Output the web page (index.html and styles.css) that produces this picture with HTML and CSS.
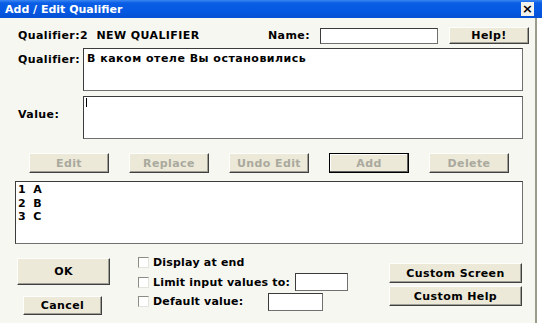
FILE: index.html
```html
<!DOCTYPE html>
<html>
<head>
<meta charset="utf-8">
<link rel="stylesheet" href="styles.css">
</head>
<body>
<div class="window">
  <div class="titlebar">
    <span class="title">Add / Edit Qualifier</span>
    <span class="close">×</span>
  </div>
  <div class="content">
    <div class="row1">
      <span class="lbl qid">Qualifier:2&nbsp;&nbsp;NEW QUALIFIER</span>
      <span class="lbl name-lbl">Name:</span>
      <span class="box name-field"></span>
      <button class="btn help">Help!</button>
    </div>
    <div class="row-text qual-row">
      <span class="lbl side">Qualifier:</span>
      <div class="box textbox">В каком отеле Вы остановились</div>
    </div>
    <div class="row-text value-row">
      <span class="lbl side value-lbl">Value:</span>
      <div class="box textbox"><span class="caret"></span></div>
    </div>
    <div class="actions">
      <button class="btn dis">Edit</button>
      <button class="btn dis">Replace</button>
      <button class="btn dis">Undo Edit</button>
      <button class="btn dis default">Add</button>
      <button class="btn dis">Delete</button>
    </div>
    <div class="box list">
      <div>1&nbsp;&nbsp;A</div>
      <div>2&nbsp;&nbsp;B</div>
      <div>3&nbsp;&nbsp;C</div>
    </div>
    <div class="bottom">
      <div class="okcol">
        <button class="btn ok">OK</button>
        <button class="btn cancel">Cancel</button>
      </div>
      <div class="checks">
        <div class="check"><span class="cb"></span><span class="lbl">Display at end</span></div>
        <div class="check"><span class="cb"></span><span class="lbl">Limit input values to:</span><span class="box small limit"></span></div>
        <div class="check"><span class="cb"></span><span class="lbl">Default value:</span><span class="box small defv"></span></div>
      </div>
      <div class="custom">
        <button class="btn wide">Custom Screen</button>
        <button class="btn wide">Custom Help</button>
      </div>
    </div>
  </div>
</div>
</body>
</html>
```

FILE: styles.css
```css
html, body {
  margin: 0;
  padding: 0;
  background: #ffffff;
}
body {
  width: 542px;
  height: 323px;
  overflow: hidden;
  font-family: "DejaVu Sans", "Liberation Sans", sans-serif;
  font-size: 11px;
  font-weight: bold;
  color: #000;
}
.window {
  width: 535px;
  height: 323px;
  background: #f7f7f2;
  border-right: 2px solid #9c9c8c;
  display: flex;
  flex-direction: column;
}
.titlebar {
  height: 18px;
  width: 542px;
  background: linear-gradient(#3b86f2 0px, #0a5ee6 3px, #0457e0 12px, #0350d4 18px);
  display: flex;
  align-items: center;
  flex-shrink: 0;
}
.title {
  color: #fff;
  font-size: 11px;
  font-weight: bold;
  margin-left: 5px;
}
.close {
  margin-left: auto;
  margin-right: 8px;
  width: 13px;
  height: 14px;
  background: #f2f2ec;
  color: #000;
  font-size: 13px;
  line-height: 14px;
  text-align: center;
  font-weight: bold;
}
.content {
  display: flex;
  flex-direction: column;
  padding-top: 9px;
}
.lbl {
  white-space: nowrap;
  letter-spacing: 0.4px;
}
.row1 {
  display: flex;
  align-items: center;
  height: 17px;
}
.qid {
  margin-left: 18px;
  width: 250px;
}
.name-lbl {
  width: 52px;
}
.box {
  background: #fff;
  border: 1px solid #3c3c3c;
  border-right-color: #707070;
  border-bottom-color: #707070;
  box-sizing: border-box;
}
.name-field {
  width: 118px;
  height: 16px;
}
.btn {
  font-family: inherit;
  font-size: 11px;
  font-weight: bold;
  color: #000;
  background: #ece9d8;
  border: 1px solid;
  border-color: #fdfdfb #404040 #404040 #fdfdfb;
  box-shadow: inset -1px -1px 0 #a09f95;
  padding: 0;
  margin: 0;
  box-sizing: border-box;
  letter-spacing: 0.4px;
}
.help {
  margin-left: 11px;
  width: 80px;
  height: 17px;
}
.row-text {
  display: flex;
  height: 43px;
}
.qual-row {
  margin-top: 4px;
}
.value-row {
  margin-top: 5px;
}
.side {
  width: 65px;
  padding-left: 18px;
  padding-top: 5px;
  box-sizing: content-box;
}
.value-lbl {
  padding-top: 12px;
}
.textbox {
  width: 440px;
  height: 43px;
  padding: 3px 3px;
  letter-spacing: 0.5px;
}
.caret {
  display: block;
  width: 1px;
  height: 9px;
  background: #000;
  margin-top: -2px;
  margin-left: -1px;
}
.actions {
  display: flex;
  gap: 20px;
  padding-left: 29px;
  margin-top: 14px;
  height: 20px;
}
.actions .btn {
  width: 80px;
  height: 20px;
}
.dis {
  color: #aaa99e;
}
.default {
  border: 1px solid #000;
  box-shadow: inset -1px -1px 0 #606060, inset 1px 1px 0 #fff;
}
.list {
  margin-top: 8px;
  margin-left: 15px;
  width: 508px;
  height: 63px;
  padding: 1px 2px;
  line-height: 13.5px;
}
.bottom {
  display: flex;
  height: 79px;
}
.okcol {
  display: flex;
  flex-direction: column;
  align-items: flex-start;
  padding-left: 17px;
}
.ok {
  margin-top: 14px;
  width: 93px;
  height: 27px;
}
.cancel {
  margin-top: 11px;
  margin-left: 6px;
  width: 79px;
  height: 19px;
}
.checks {
  margin-left: 28px;
  margin-top: 9px;
  display: flex;
  flex-direction: column;
}
.checks .lbl {
  letter-spacing: 0.2px;
}
.check {
  display: flex;
  align-items: center;
  height: 19.5px;
}
.cb {
  width: 11px;
  height: 11px;
  box-sizing: border-box;
  background: #fff;
  border: 1px solid;
  border-color: #8c8c84 #e4e4dc #e4e4dc #8c8c84;
  margin-right: 4px;
}
.small {
  height: 18px;
}
.limit {
  width: 53px;
  margin-left: 5px;
}
.defv {
  width: 55px;
  margin-left: 25px;
}
.custom {
  margin-left: auto;
  margin-right: 13px;
  margin-top: 19px;
  display: flex;
  flex-direction: column;
  gap: 3px;
}
.wide {
  width: 133px;
  height: 20px;
}
```
